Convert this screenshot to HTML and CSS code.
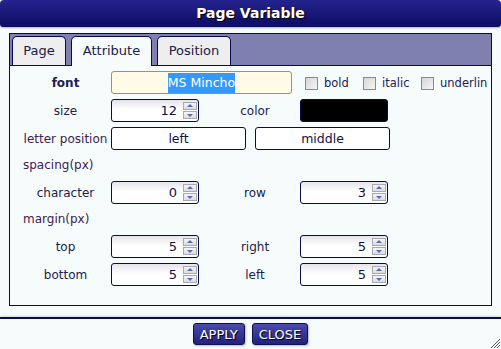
FILE: index.html
```html
<!DOCTYPE html>
<html lang="en">
<head>
  <meta charset="UTF-8" />
  <title>Page Variable</title>
  <link rel="stylesheet" href="styles.css">
</head>
<body>

  <div class="dialog">
    <!-- TITLE -->
    <div class="titlebar">Page Variable</div>

    <!-- TABS + ATTRIBUTE FORM -->
    <div class="panel">
      <div class="tabs">
        <div class="tab">Page</div>
        <div class="tab active">Attribute</div>
        <div class="tab">Position</div>
      </div>

      <div class="tab-body">
        <div class="row">
          <div class="label strong">font</div>
          <div class="font-box"><span class="sel">MS Mincho</span></div>
          <div class="checks">
            <label class="check"><span class="box"></span>bold</label>
            <label class="check"><span class="box"></span>italic</label>
            <label class="check"><span class="box"></span>underlin</label>
          </div>
        </div>

        <div class="row">
          <div class="label">size</div>
          <div class="num"><span class="val">12</span><span class="spin"><i class="up"></i><i class="down"></i></span></div>
          <div class="label2">color</div>
          <div class="swatch"></div>
        </div>

        <div class="row">
          <div class="label alt">letter position</div>
          <div class="pick">left</div>
          <div class="pick second">middle</div>
        </div>

        <div class="section">spacing(px)</div>

        <div class="row">
          <div class="label">character</div>
          <div class="num"><span class="val">0</span><span class="spin"><i class="up"></i><i class="down"></i></span></div>
          <div class="label2">row</div>
          <div class="num"><span class="val">3</span><span class="spin"><i class="up"></i><i class="down"></i></span></div>
        </div>

        <div class="section">margin(px)</div>

        <div class="row">
          <div class="label">top</div>
          <div class="num"><span class="val">5</span><span class="spin"><i class="up"></i><i class="down"></i></span></div>
          <div class="label2">right</div>
          <div class="num"><span class="val">5</span><span class="spin"><i class="up"></i><i class="down"></i></span></div>
        </div>

        <div class="row">
          <div class="label">bottom</div>
          <div class="num"><span class="val">5</span><span class="spin"><i class="up"></i><i class="down"></i></span></div>
          <div class="label2">left</div>
          <div class="num"><span class="val">5</span><span class="spin"><i class="up"></i><i class="down"></i></span></div>
        </div>
      </div>
    </div>

    <!-- BUTTONS -->
    <div class="footer">
      <button class="btn">APPLY</button>
      <button class="btn">CLOSE</button>
    </div>

    <svg class="grip" width="12" height="12" viewBox="0 0 12 12">
      <path d="M11 2 L2 11 M11 5 L5 11 M11 8 L8 11" stroke="#555" stroke-width="1" fill="none"/>
    </svg>
  </div>

</body>
</html>
```

FILE: styles.css
```css
body {
  margin: 0;
  background: #f6fcfc;
  font-family: "DejaVu Sans", Verdana, sans-serif;
  font-size: 12px;
  color: #202050;
}

.dialog {
  position: relative;
  width: 501px;
  height: 349px;
  overflow: hidden;
}

.titlebar {
  height: 27px;
  line-height: 27px;
  text-align: center;
  color: #fff;
  font-size: 14px;
  font-weight: bold;
  text-shadow: 1px 1px 1px #000;
  background: linear-gradient(#24248e, #0c0c62);
  border-radius: 4px 4px 3px 3px;
  box-shadow: 0 1px 2px rgba(0,0,40,0.3);
}

.panel {
  margin: 6px 9px 0 9px;
  border: 1px solid #0a0a50;
  height: 271px;
  display: flex;
  flex-direction: column;
}

.tabs {
  display: flex;
  gap: 5px;
  padding: 2px 2px 0;
  background: #8080b0;
  height: 29px;
}

.tab {
  line-height: 27px;
  font-size: 13px;
  text-align: center;
  color: #1a1a48;
  background: #eeeeee;
  border: 1px solid #0a0a50;
  border-bottom: none;
  border-radius: 5px 5px 0 0;
  box-sizing: border-box;
  height: 29px;
}
.tab:nth-child(1) { width: 54px; }
.tab:nth-child(2) { width: 81px; }
.tab:nth-child(3) { width: 74px; }

.tab.active {
  background: #f6fcfc;
  height: 30px;
  position: relative;
  z-index: 1;
}

.tab-body {
  flex: 1;
  border-top: 1px solid #0a0a50;
  padding: 5px 0 0 10px;
}

.row {
  display: flex;
  align-items: center;
  height: 23px;
  margin-bottom: 5px;
}
.row > * { flex-shrink: 0; }

.label {
  width: 91px;
  text-align: center;
}
.label.strong { font-weight: bold; }
.label.alt { color: #402050; }

.label2 {
  width: 90px;
  margin-left: 11px;
  text-align: center;
}

.section {
  height: 21px;
  line-height: 21px;
  margin-bottom: 5px;
  padding-left: 3px;
  color: #402050;
}

.font-box {
  width: 181px;
  height: 23px;
  box-sizing: border-box;
  border: 1px solid #c08a3a;
  border-radius: 3px;
  background: #fffbe6;
  text-align: center;
  line-height: 21px;
  font-size: 12.5px;
}
.font-box .sel {
  background: #3399ff;
  color: #fff;
  padding: 2px 0 3px;
}

.checks {
  display: flex;
  margin-left: 13px;
  white-space: nowrap;
}
.check {
  display: flex;
  align-items: center;
  gap: 6px;
  width: 58px;
  flex-shrink: 0;
  font-size: 11.5px;
  padding-top: 1px;
}
.check:last-child { width: auto; }
.check .box {
  width: 11px;
  height: 11px;
  flex-shrink: 0;
  border: 1px solid #8a8a8a;
  background: linear-gradient(135deg, #d6d6d6, #f4f4f4);
}

.num {
  width: 88px;
  height: 23px;
  box-sizing: border-box;
  border: 1px solid #0a0a50;
  border-radius: 3px;
  background: linear-gradient(#e4e4ea, #ffffff 45%);
  display: flex;
  align-items: center;
  justify-content: flex-end;
  padding-right: 1px;
}
.num .val {
  font-size: 13px;
  color: #101040;
  margin-right: 6px;
}
.spin {
  display: flex;
  flex-direction: column;
  gap: 1px;
}
.spin i {
  display: block;
  width: 14px;
  height: 8px;
  box-sizing: border-box;
  border: 1px solid #a8a8b0;
  background: linear-gradient(#f4f4f4, #dcdce0);
  position: relative;
}
.spin i::after {
  content: "";
  position: absolute;
  left: 3px;
  top: 1px;
  border-left: 3px solid transparent;
  border-right: 3px solid transparent;
}
.spin i.up::after { border-bottom: 3px solid #5a6ab8; }
.spin i.down::after { border-top: 3px solid #5a6ab8; top: 2px; }

.swatch {
  width: 88px;
  height: 23px;
  box-sizing: border-box;
  border: 1px solid #0a0a50;
  border-radius: 3px;
  background: #000;
}

.pick {
  width: 135px;
  height: 23px;
  box-sizing: border-box;
  border: 1px solid #0a0a50;
  border-radius: 3px;
  background: #fff;
  text-align: center;
  line-height: 21px;
  font-size: 12.5px;
  color: #101040;
}
.pick.second { margin-left: 9px; }

.footer {
  margin-top: 11px;
  border-top: 2px solid #0a0a50;
  box-shadow: 0 -1px 2px rgba(0,0,60,0.15);
  display: flex;
  justify-content: center;
  gap: 7px;
  padding-top: 4px;
}

.btn {
  height: 22px;
  padding: 0 6px;
  font-family: "DejaVu Sans", Verdana, sans-serif;
  font-size: 13px;
  color: #fff;
  text-shadow: 1px 1px 1px #000;
  background: linear-gradient(#4a4aaa, #22227e);
  border: 1px solid #101050;
  border-radius: 3px;
  box-shadow: 1px 1px 2px rgba(0,0,0,0.25);
  cursor: pointer;
}
.btn:hover { background: #1a1a70; }

.grip {
  position: absolute;
  right: 0;
  bottom: 0;
}
```
